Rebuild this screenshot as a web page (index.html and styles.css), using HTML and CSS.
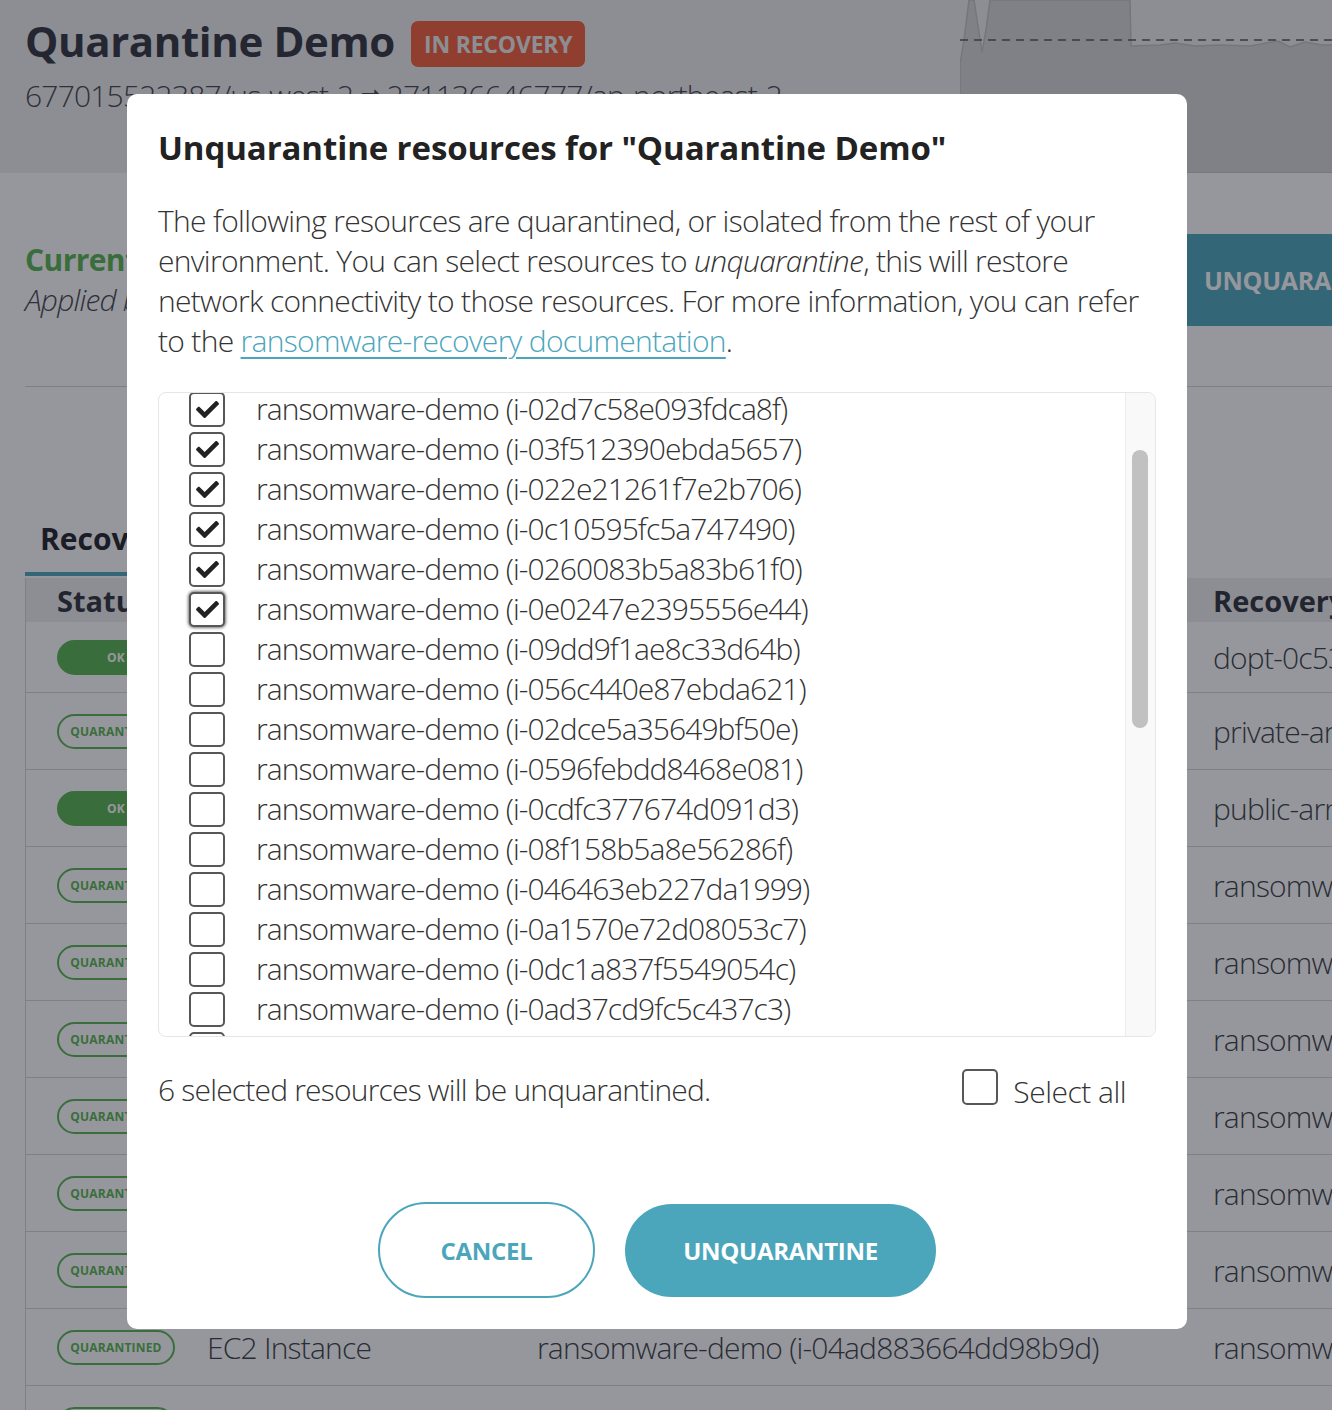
FILE: index.html
```html
<!DOCTYPE html>
<html lang="en">
<head>
<meta charset="utf-8">
<title>Quarantine Demo</title>
<link rel="stylesheet" href="styles.css">
</head>
<body>
<div class="page">
  <header class="top">
    <div class="top-main">
      <div class="title-row">
        <h1 class="page-title">Quarantine Demo</h1>
        <span class="badge">IN RECOVERY</span>
      </div>
      <div class="route">677015522387/us-west-2 <span class="arrow">➞</span> 271136646777/ap-northeast-2</div>
    </div>
    <div class="chart">
      <svg class="chart-svg" width="540" height="173" viewBox="0 0 540 173">
        <path d="M0,173 L0,64 L4,40 L9,0 L14,0 L22,52 L26,30 L30,0 L170,0 L171,46 L200,45 L215,43 L235,46 L260,45 L290,46 L318,41 L330,47 L345,42 L362,45 L540,44 L540,173 Z" fill="#d7d7d9" stroke="#c3c3c7" stroke-width="1.5"/>
        <line x1="0" y1="40" x2="540" y2="40" stroke="#555" stroke-width="1.5" stroke-dasharray="8 6"/>
      </svg>
    </div>
  </header>

  <section class="status">
    <div class="status-text">
      <div class="current">Current status: Recovery in progress</div>
      <div class="applied">Applied by admin on 2023-03-14 10:22</div>
    </div>
    <button class="big-btn">UNQUARANTINE</button>
  </section>

  <nav class="tabs">
    <div class="tab">Recovery Resources</div>
  </nav>

  <div class="tbl">
    <div class="thead">
      <div class="c1">Status</div><div>Type</div><div>Name</div><div>Recovery</div>
    </div>
    <div class="row first"><div class="c1"><span class="pill ok">OK</span></div><div>DHCP Options</div><div>dopt-0c53a81e2f7b4d911</div><div>dopt-0c53a81e2f7b4d911</div></div>
    <div class="row"><div class="c1"><span class="pill">QUARANTINED</span></div><div>Network ACL</div><div>private-acl (acl-0b1e5d)</div><div>private-arn-acl</div></div>
    <div class="row"><div class="c1"><span class="pill ok">OK</span></div><div>Network ACL</div><div>public-acl (acl-07cc41)</div><div>public-arn-acl</div></div>
    <div class="row"><div class="c1"><span class="pill">QUARANTINED</span></div><div>EC2 Instance</div><div>ransomware-demo (i-0ad37cd9fc5c437c3)</div><div>ransomware-demo</div></div>
    <div class="row"><div class="c1"><span class="pill">QUARANTINED</span></div><div>EC2 Instance</div><div>ransomware-demo (i-0dc1a837f5549054c)</div><div>ransomware-demo</div></div>
    <div class="row"><div class="c1"><span class="pill">QUARANTINED</span></div><div>EC2 Instance</div><div>ransomware-demo (i-0a1570e72d08053c7)</div><div>ransomware-demo</div></div>
    <div class="row"><div class="c1"><span class="pill">QUARANTINED</span></div><div>EC2 Instance</div><div>ransomware-demo (i-046463eb227da1999)</div><div>ransomware-demo</div></div>
    <div class="row"><div class="c1"><span class="pill">QUARANTINED</span></div><div>EC2 Instance</div><div>ransomware-demo (i-08f158b5a8e56286f)</div><div>ransomware-demo</div></div>
    <div class="row"><div class="c1"><span class="pill">QUARANTINED</span></div><div>EC2 Instance</div><div>ransomware-demo (i-0cdfc377674d091d3)</div><div>ransomware-demo</div></div>
    <div class="row"><div class="c1"><span class="pill">QUARANTINED</span></div><div>EC2 Instance</div><div>ransomware-demo (i-04ad883664dd98b9d)</div><div>ransomware-demo</div></div>
    <div class="row"><div class="c1"><span class="pill">QUARANTINED</span></div><div>EC2 Instance</div><div>ransomware-demo (i-0596febdd8468e081)</div><div>ransomware-demo</div></div>
  </div>
</div>

<div class="overlay">
  <div class="modal" role="dialog">
    <h2 class="modal-title">Unquarantine resources for "Quarantine Demo"</h2>
    <p class="modal-text">The following resources are quarantined, or isolated from the rest of your<br>environment. You can select resources to <em>unquarantine</em>, this will restore<br>network connectivity to those resources. For more information, you can refer<br>to the <a href="#">ransomware-recovery documentation</a>.</p>

    <div class="list">
      <ul class="items">
        <li><span class="cb on"><svg viewBox="0 0 512 512"><path d="M173.9 439.4l-166.4-166.4c-10-10-10-26.2 0-36.2l36.2-36.2c10-10 26.2-10 36.2 0L192 312.7 432.1 72.6c10-10 26.2-10 36.2 0l36.2 36.2c10 10 10 26.2 0 36.2l-294.4 294.4c-10 10-26.2 10-36.2 0z"/></svg></span><span class="lbl">ransomware-demo (i-02d7c58e093fdca8f)</span></li>
        <li><span class="cb on"><svg viewBox="0 0 512 512"><path d="M173.9 439.4l-166.4-166.4c-10-10-10-26.2 0-36.2l36.2-36.2c10-10 26.2-10 36.2 0L192 312.7 432.1 72.6c10-10 26.2-10 36.2 0l36.2 36.2c10 10 10 26.2 0 36.2l-294.4 294.4c-10 10-26.2 10-36.2 0z"/></svg></span><span class="lbl">ransomware-demo (i-03f512390ebda5657)</span></li>
        <li><span class="cb on"><svg viewBox="0 0 512 512"><path d="M173.9 439.4l-166.4-166.4c-10-10-10-26.2 0-36.2l36.2-36.2c10-10 26.2-10 36.2 0L192 312.7 432.1 72.6c10-10 26.2-10 36.2 0l36.2 36.2c10 10 10 26.2 0 36.2l-294.4 294.4c-10 10-26.2 10-36.2 0z"/></svg></span><span class="lbl">ransomware-demo (i-022e21261f7e2b706)</span></li>
        <li><span class="cb on"><svg viewBox="0 0 512 512"><path d="M173.9 439.4l-166.4-166.4c-10-10-10-26.2 0-36.2l36.2-36.2c10-10 26.2-10 36.2 0L192 312.7 432.1 72.6c10-10 26.2-10 36.2 0l36.2 36.2c10 10 10 26.2 0 36.2l-294.4 294.4c-10 10-26.2 10-36.2 0z"/></svg></span><span class="lbl">ransomware-demo (i-0c10595fc5a747490)</span></li>
        <li><span class="cb on"><svg viewBox="0 0 512 512"><path d="M173.9 439.4l-166.4-166.4c-10-10-10-26.2 0-36.2l36.2-36.2c10-10 26.2-10 36.2 0L192 312.7 432.1 72.6c10-10 26.2-10 36.2 0l36.2 36.2c10 10 10 26.2 0 36.2l-294.4 294.4c-10 10-26.2 10-36.2 0z"/></svg></span><span class="lbl">ransomware-demo (i-0260083b5a83b61f0)</span></li>
        <li><span class="cb on focus"><svg viewBox="0 0 512 512"><path d="M173.9 439.4l-166.4-166.4c-10-10-10-26.2 0-36.2l36.2-36.2c10-10 26.2-10 36.2 0L192 312.7 432.1 72.6c10-10 26.2-10 36.2 0l36.2 36.2c10 10 10 26.2 0 36.2l-294.4 294.4c-10 10-26.2 10-36.2 0z"/></svg></span><span class="lbl">ransomware-demo (i-0e0247e2395556e44)</span></li>
        <li><span class="cb"></span><span class="lbl">ransomware-demo (i-09dd9f1ae8c33d64b)</span></li>
        <li><span class="cb"></span><span class="lbl">ransomware-demo (i-056c440e87ebda621)</span></li>
        <li><span class="cb"></span><span class="lbl">ransomware-demo (i-02dce5a35649bf50e)</span></li>
        <li><span class="cb"></span><span class="lbl">ransomware-demo (i-0596febdd8468e081)</span></li>
        <li><span class="cb"></span><span class="lbl">ransomware-demo (i-0cdfc377674d091d3)</span></li>
        <li><span class="cb"></span><span class="lbl">ransomware-demo (i-08f158b5a8e56286f)</span></li>
        <li><span class="cb"></span><span class="lbl">ransomware-demo (i-046463eb227da1999)</span></li>
        <li><span class="cb"></span><span class="lbl">ransomware-demo (i-0a1570e72d08053c7)</span></li>
        <li><span class="cb"></span><span class="lbl">ransomware-demo (i-0dc1a837f5549054c)</span></li>
        <li><span class="cb"></span><span class="lbl">ransomware-demo (i-0ad37cd9fc5c437c3)</span></li>
        <li><span class="cb"></span><span class="lbl">ransomware-demo (i-04ad883664dd98b9d)</span></li>
        <li><span class="cb"></span><span class="lbl">ransomware-demo (i-0b7e1c4d2a9f83e65)</span></li>
      </ul>
      <div class="track"><div class="thumb"></div></div>
    </div>

    <div class="foot">
      <span class="count">6 selected resources will be unquarantined.</span>
      <label class="selall"><span class="cb"></span><span class="sel-lbl">Select all</span></label>
    </div>

    <div class="actions">
      <button class="btn btn-cancel">CANCEL</button>
      <button class="btn btn-primary">UNQUARANTINE</button>
    </div>
  </div>
</div>
</body>
</html>
```
FILE: styles.css
```css
html, body {
  margin: 0;
  padding: 0;
}
body {
  width: 1332px;
  height: 1410px;
  overflow: hidden;
  background: #fff;
  color: #333;
  font-family: "Open Sans", "Noto Sans", sans-serif;
}

/* ---------- background page ---------- */
.page {
  width: 1500px;
}
.top {
  display: flex;
  height: 173px;
  background: #efefef;
}
.top-main {
  flex: 1;
  padding: 13px 0 0 25px;
}
.title-row {
  display: flex;
  align-items: center;
  gap: 16px;
  height: 56px;
}
.page-title {
  margin: 0;
  font-size: 42px;
  line-height: 56px;
  font-weight: 700;
  color: #30343e;
  letter-spacing: -0.4px;
}
.badge {
  margin-top: 6px;
  padding: 0 13px;
  border-radius: 7px;
  background: #f25d39;
  color: #efefef;
  font-size: 23px;
  line-height: 46px;
  font-weight: 700;
  letter-spacing: -0.2px;
}
.route {
  margin-top: 5px;
  font-size: 30px;
  line-height: 40px;
  font-weight: 300;
  letter-spacing: -0.8px;
  color: #40444d;
  white-space: nowrap;
}
.arrow {
  font-family: "DejaVu Sans", sans-serif;
  font-size: 24px;
  font-weight: 700;
  vertical-align: 5px;
}
.chart {
  width: 540px;
  flex: none;
}
.chart-svg {
  display: block;
}

.status {
  display: flex;
  align-items: center;
  justify-content: space-between;
  margin-left: 25px;
  padding: 61px 0 60px;
  border-bottom: 1px solid #d6d6d8;
}
.current {
  font-size: 30px;
  line-height: 40px;
  font-weight: 700;
  letter-spacing: -0.6px;
  color: #57b450;
}
.applied {
  font-size: 30px;
  line-height: 40px;
  font-weight: 300;
  font-style: italic;
  letter-spacing: -0.8px;
  color: #40444d;
}
.big-btn {
  width: 313px;
  height: 92px;
  border: 0;
  padding: 0 0 0 17px;
  text-align: left;
  background: #4ba6bc;
  color: #fff;
  font-family: inherit;
  font-size: 25px;
  font-weight: 700;
  letter-spacing: -0.3px;
}

.tabs {
  display: flex;
  margin: 132px 0 0 25px;
}
.tab {
  padding: 0 15px 13px;
  border-bottom: 4px solid #4ba6bc;
  font-size: 30px;
  line-height: 40px;
  font-weight: 700;
  color: #1e2128;
}

.tbl {
  margin: 2px 0 0 25px;
  border-left: 1px solid #d6d6d8;
}
.thead, .row {
  display: grid;
  grid-template-columns: 181px 330px 676px 1fr;
  align-items: center;
}
.thead {
  height: 44px;
  background: #eeeeee;
  font-size: 29px;
  font-weight: 700;
  color: #2d313b;
}
.c1 {
  padding-left: 31px;
}
.row .c1 {
  display: flex;
  align-items: center;
}
.row {
  height: 77px;
  box-sizing: border-box;
  border-bottom: 1px solid #d6d6d8;
  font-size: 30px;
  font-weight: 300;
  letter-spacing: -0.8px;
  color: #3a3d45;
  white-space: nowrap;
}
.row.first {
  height: 71px;
}
.pill {
  display: block;
  width: 118px;
  height: 35px;
  box-sizing: border-box;
  border: 2px solid #57b450;
  border-radius: 18px;
  color: #57b450;
  font-size: 12px;
  line-height: 31px;
  font-weight: 700;
  letter-spacing: 0.2px;
  text-align: center;
}
.pill.ok {
  background: #57b450;
  color: #fff;
}

/* ---------- modal ---------- */
.overlay {
  position: fixed;
  inset: 0;
  box-sizing: border-box;
  padding: 94px 18px 0 0;
  display: flex;
  justify-content: center;
  align-items: flex-start;
  background: rgba(22, 24, 35, 0.45);
}
.modal {
  width: 1060px;
  box-sizing: border-box;
  padding: 32px 31px 31px;
  background: #fff;
  border-radius: 10px;
}
.modal-title {
  margin: 0;
  font-size: 33px;
  line-height: 44px;
  font-weight: 700;
  color: #222;
  letter-spacing: -0.1px;
  white-space: nowrap;
}
.modal-text {
  margin: 31px 0 0;
  font-size: 30px;
  line-height: 40px;
  font-weight: 300;
  letter-spacing: -0.7px;
  color: #333;
  white-space: nowrap;
}
.modal-text em {
  font-style: italic;
}
.modal-text a {
  color: #4ba6bc;
  text-decoration: underline;
  text-decoration-thickness: 2px;
  text-underline-offset: 5px;
}

.list {
  display: flex;
  height: 645px;
  margin-top: 31px;
  box-sizing: border-box;
  border: 1px solid #e6e6e6;
  border-radius: 8px;
  overflow: hidden;
}
.items {
  flex: 1;
  list-style: none;
  margin: -4px 0 0;
  padding: 0 0 0 30px;
}
.items li {
  display: flex;
  align-items: center;
  gap: 31px;
  height: 40px;
}
.lbl, .count, .sel-lbl {
  font-size: 30px;
  line-height: 40px;
  font-weight: 300;
  letter-spacing: -0.95px;
  color: #333;
  white-space: nowrap;
}
.count {
  letter-spacing: -0.8px;
}
.cb {
  display: flex;
  align-items: center;
  justify-content: center;
  flex: none;
  width: 36px;
  height: 35px;
  box-sizing: border-box;
  border: 2px solid #575757;
  border-radius: 5px;
  background: #fff;
}
.cb svg {
  width: 23px;
  height: 23px;
  fill: #222;
}
.cb.focus {
  box-shadow: 0 0 3px 1px rgba(0, 0, 0, 0.55);
}
.track {
  flex: none;
  width: 29px;
  border-left: 1px solid #ececec;
  background: #f9f9f9;
}
.thumb {
  width: 16px;
  height: 278px;
  margin: 57px 0 0 6px;
  border-radius: 8px;
  background: #c1c1c1;
}

.foot {
  display: flex;
  align-items: center;
  justify-content: space-between;
  height: 40px;
  margin-top: 33px;
  padding-right: 30px;
}
.selall {
  display: flex;
  align-items: center;
  gap: 15px;
}
.selall .cb {
  height: 36px;
  margin-top: -6px;
}
.sel-lbl {
  margin-top: 4px;
  letter-spacing: -0.5px;
}

.actions {
  display: flex;
  justify-content: center;
  align-items: center;
  gap: 30px;
  margin-top: 92px;
}
.btn {
  box-sizing: border-box;
  font-family: inherit;
  font-size: 24px;
  font-weight: 700;
  letter-spacing: -0.3px;
  cursor: pointer;
}
.btn-cancel {
  width: 217px;
  height: 96px;
  border: 2px solid #4ba6bc;
  border-radius: 48px;
  background: #fff;
  color: #4ba6bc;
}
.btn-primary {
  width: 311px;
  height: 93px;
  border: 0;
  border-radius: 47px;
  background: #4ba6bc;
  color: #fff;
}
```
